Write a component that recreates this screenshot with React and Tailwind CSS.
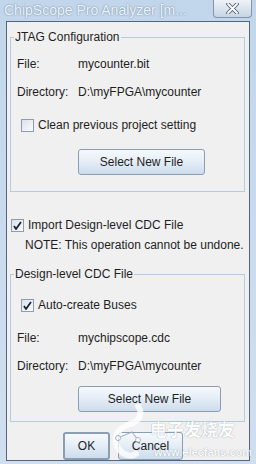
const font = { fontFamily: '"Liberation Sans", Arial, sans-serif' }

function CheckBox({ checked }) {
  return (
    <span className="w-[13px] h-[13px] shrink-0 border border-[#8e9cad] bg-gradient-to-br from-[#d9e2ec] to-[#fbfcfd] flex items-center justify-center">
      {checked && (
        <svg width="9" height="9" viewBox="0 0 9 9">
          <path d="M1 5 L3 8 L8 1" fill="none" stroke="#1c2530" strokeWidth="1.8" />
        </svg>
      )}
    </span>
  )
}

function Btn({ children, className = '' }) {
  return (
    <button
      className={`h-[26px] border border-[#8a9db3] rounded-[3px] bg-gradient-to-b from-[#f6f9fc] via-[#e4edf6] to-[#cddcec] text-[12px] text-[#1e1e1e] ${className}`}
    >
      {children}
    </button>
  )
}

function Row({ label, value }) {
  return (
    <div className="h-[20px] flex items-center">
      <span className="w-[67px] pl-[6px]">{label}</span>
      <span>{value}</span>
    </div>
  )
}

function Group({ title, children, className = '' }) {
  return (
    <fieldset className={`border border-[#b4cbe2] ml-[3px] mr-[4px] ${className}`}>
      <legend className="ml-[3px] px-[1px] h-[14px] leading-[14px]">{title}</legend>
      {children}
    </fieldset>
  )
}

export default function App() {
  return (
    <div className="w-[256px] h-[464px] bg-gradient-to-b from-[#c2d6eb] to-[#cfdff0] flex flex-col relative overflow-hidden text-[12px] text-[#1e1e1e]" style={font}>
      {/* title bar */}
      <div className="h-[21px] flex items-start shrink-0">
        <span className="pl-[4px] pt-[2px] text-[14px] leading-[17px] text-[#eef3f9] whitespace-nowrap [text-shadow:0_0_2px_#7f98b3,0_0_1px_#7f98b3]">
          ChipScope Pro Analyzer [m...
        </span>
        <div className="ml-auto mr-[4px] w-[39px] h-[18px] border border-t-0 border-[#8194a9] rounded-b-[4px] bg-gradient-to-b from-[#eef3f8] to-[#c7d5e4] flex items-center justify-center">
          <svg width="13" height="11" viewBox="0 0 13 11">
            <path d="M2 1 L11 10 M11 1 L2 10" stroke="#4f5f70" strokeWidth="3.6" strokeLinecap="round" />
            <path d="M2 1 L11 10 M11 1 L2 10" stroke="#ffffff" strokeWidth="1.8" strokeLinecap="round" />
          </svg>
        </div>
      </div>

      {/* content */}
      <div className="mx-[6px] flex-1 mb-[3px] border border-[#55667a] bg-[#f0f0f0] pt-[8px] flex flex-col">
        <Group title="JTAG Configuration" className="pb-[16px]">
          <div className="pt-[10px]">
            <Row label="File:" value="mycounter.bit" />
            <div className="h-[8px]" />
            <Row label="Directory:" value="D:\myFPGA\mycounter" />
            <div className="h-[20px] mt-[13px] flex items-center pl-[10px] gap-[4px]">
              <CheckBox />
              <span>Clean previous project setting</span>
            </div>
            <div className="mt-[14px] pl-[67px]">
              <Btn className="w-[127px]">Select New File</Btn>
            </div>
          </div>
        </Group>

        <div className="h-[20px] mt-[23px] flex items-center pl-[4px] gap-[4px]">
          <CheckBox checked />
          <span>Import Design-level CDC File</span>
        </div>
        <div className="h-[20px] flex items-center pl-[18px]">NOTE: This operation cannot be undone.</div>

        <Group title="Design-level CDC File" className="mt-[12px] pb-[9px]">
          <div className="pt-[14px]">
            <div className="h-[20px] flex items-center pl-[10px] gap-[4px]">
              <CheckBox checked />
              <span>Auto-create Buses</span>
            </div>
            <div className="h-[13px]" />
            <Row label="File:" value="mychipscope.cdc" />
            <div className="h-[8px]" />
            <Row label="Directory:" value="D:\myFPGA\mycounter" />
            <div className="mt-[10px] pl-[67px]">
              <Btn className="w-[143px]">Select New File</Btn>
            </div>
          </div>
        </Group>

        <div className="mt-[10px] flex pl-[56px] gap-[8px]">
          <Btn className="w-[47px] h-[28px] border-[#5f7690] border-2">OK</Btn>
          <Btn className="w-[65px] h-[28px]">Cancel</Btn>
        </div>
      </div>

      {/* watermark */}
      <div className="absolute left-[108px] top-[404px] w-[148px] h-[60px] pointer-events-none opacity-80">
        <svg width="40" height="58" viewBox="0 0 40 58" className="absolute left-0 top-0">
          <path d="M30 2 C36 10 30 18 22 20 C10 24 4 34 10 44 C14 50 22 54 28 50" fill="none" stroke="#ffffff" strokeWidth="6" strokeLinecap="round" />
          <path d="M10 34 L24 28 L30 36" fill="none" stroke="#9aa9b8" strokeWidth="1.2" />
          <circle cx="10" cy="34" r="2.5" fill="#ffffff" stroke="#9aa9b8" />
          <circle cx="30" cy="36" r="2.5" fill="#ffffff" stroke="#9aa9b8" />
        </svg>
        <span
          className="absolute left-[42px] top-[15px] text-[17px] leading-[20px] font-bold text-white [text-shadow:0_0_1px_#6c7c8c]"
          style={{ fontFamily: '"Noto Sans CJK SC", sans-serif' }}
        >
          电子发烧友
        </span>
        <span className="absolute left-[46px] top-[42px] text-[11px] leading-[13px] font-bold text-white [text-shadow:0_0_1px_#6c7c8c]">
          www.elecfans.com
        </span>
      </div>
    </div>
  )
}
